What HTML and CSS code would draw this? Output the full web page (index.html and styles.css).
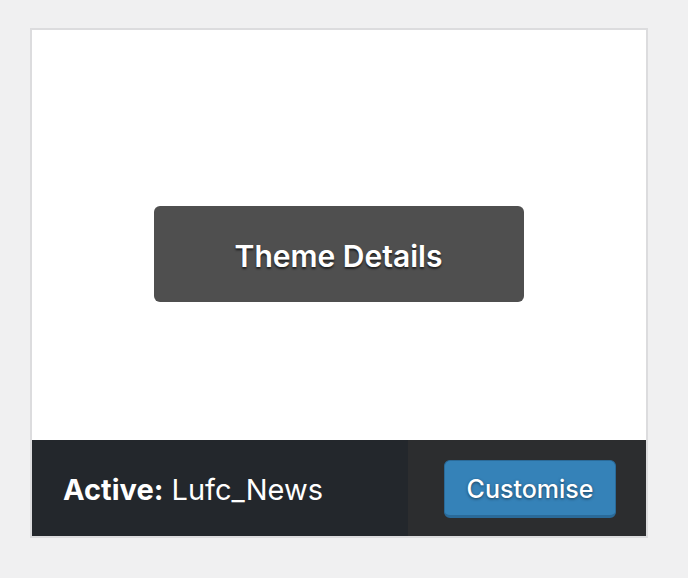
FILE: index.html
```html
<!DOCTYPE html>
<html>
<head>
<meta charset="utf-8">
<link rel="stylesheet" href="styles.css">
</head>
<body>
<div class="theme">
  <div class="screenshot">
    <button class="details">Theme Details</button>
  </div>
  <div class="bar">
    <h2 class="name"><span class="label">Active:</span> Lufc_News</h2>
    <div class="actions">
      <button class="customise">Customise</button>
    </div>
  </div>
</div>
</body>
</html>
```
FILE: styles.css
```css
html, body {
  margin: 0;
  padding: 0;
  background: #f0f0f1;
  font-family: Inter, "Noto Sans", sans-serif;
}
body {
  padding: 28px 0 0 30px;
}
.theme {
  width: 614px;
  border: 2px solid #dcdcde;
  background: #fff;
  display: flex;
  flex-direction: column;
}
.screenshot {
  height: 410px;
  display: flex;
  justify-content: center;
  align-items: flex-start;
  padding-top: 176px;
  box-sizing: border-box;
}
.details {
  width: 370px;
  height: 96px;
  border: none;
  border-radius: 6px;
  background: #4f4f4f;
  color: #fff;
  font-family: Inter, "Noto Sans", sans-serif;
  font-size: 30px;
  font-weight: 600;
  text-shadow: 0 2px 2px rgba(0,0,0,0.6);
  padding: 4px 0 0;
  margin-right: 1px;
}
.bar {
  height: 96px;
  display: flex;
}
.name {
  margin: 0;
  width: 376px;
  background: #23272c;
  color: #fff;
  font-size: 29px;
  font-weight: 400;
  display: flex;
  align-items: center;
  padding-left: 31px;
  padding-top: 2px;
  box-sizing: border-box;
  white-space: pre;
}
.label {
  font-weight: 700;
}
.actions {
  flex: 1;
  background: #2c2d2f;
  display: flex;
  align-items: center;
  justify-content: flex-end;
  padding-right: 30px;
  padding-top: 2px;
}
.customise {
  width: 172px;
  height: 58px;
  border: 1px solid #2a6a99;
  border-bottom-width: 3px;
  border-radius: 6px;
  background: #3582b8;
  color: #fff;
  font-family: Inter, "Noto Sans", sans-serif;
  font-size: 25px;
  font-weight: 500;
  text-shadow: 0 1px 3px rgba(0,0,0,0.5);
  padding: 2px 0 0;
}
```
